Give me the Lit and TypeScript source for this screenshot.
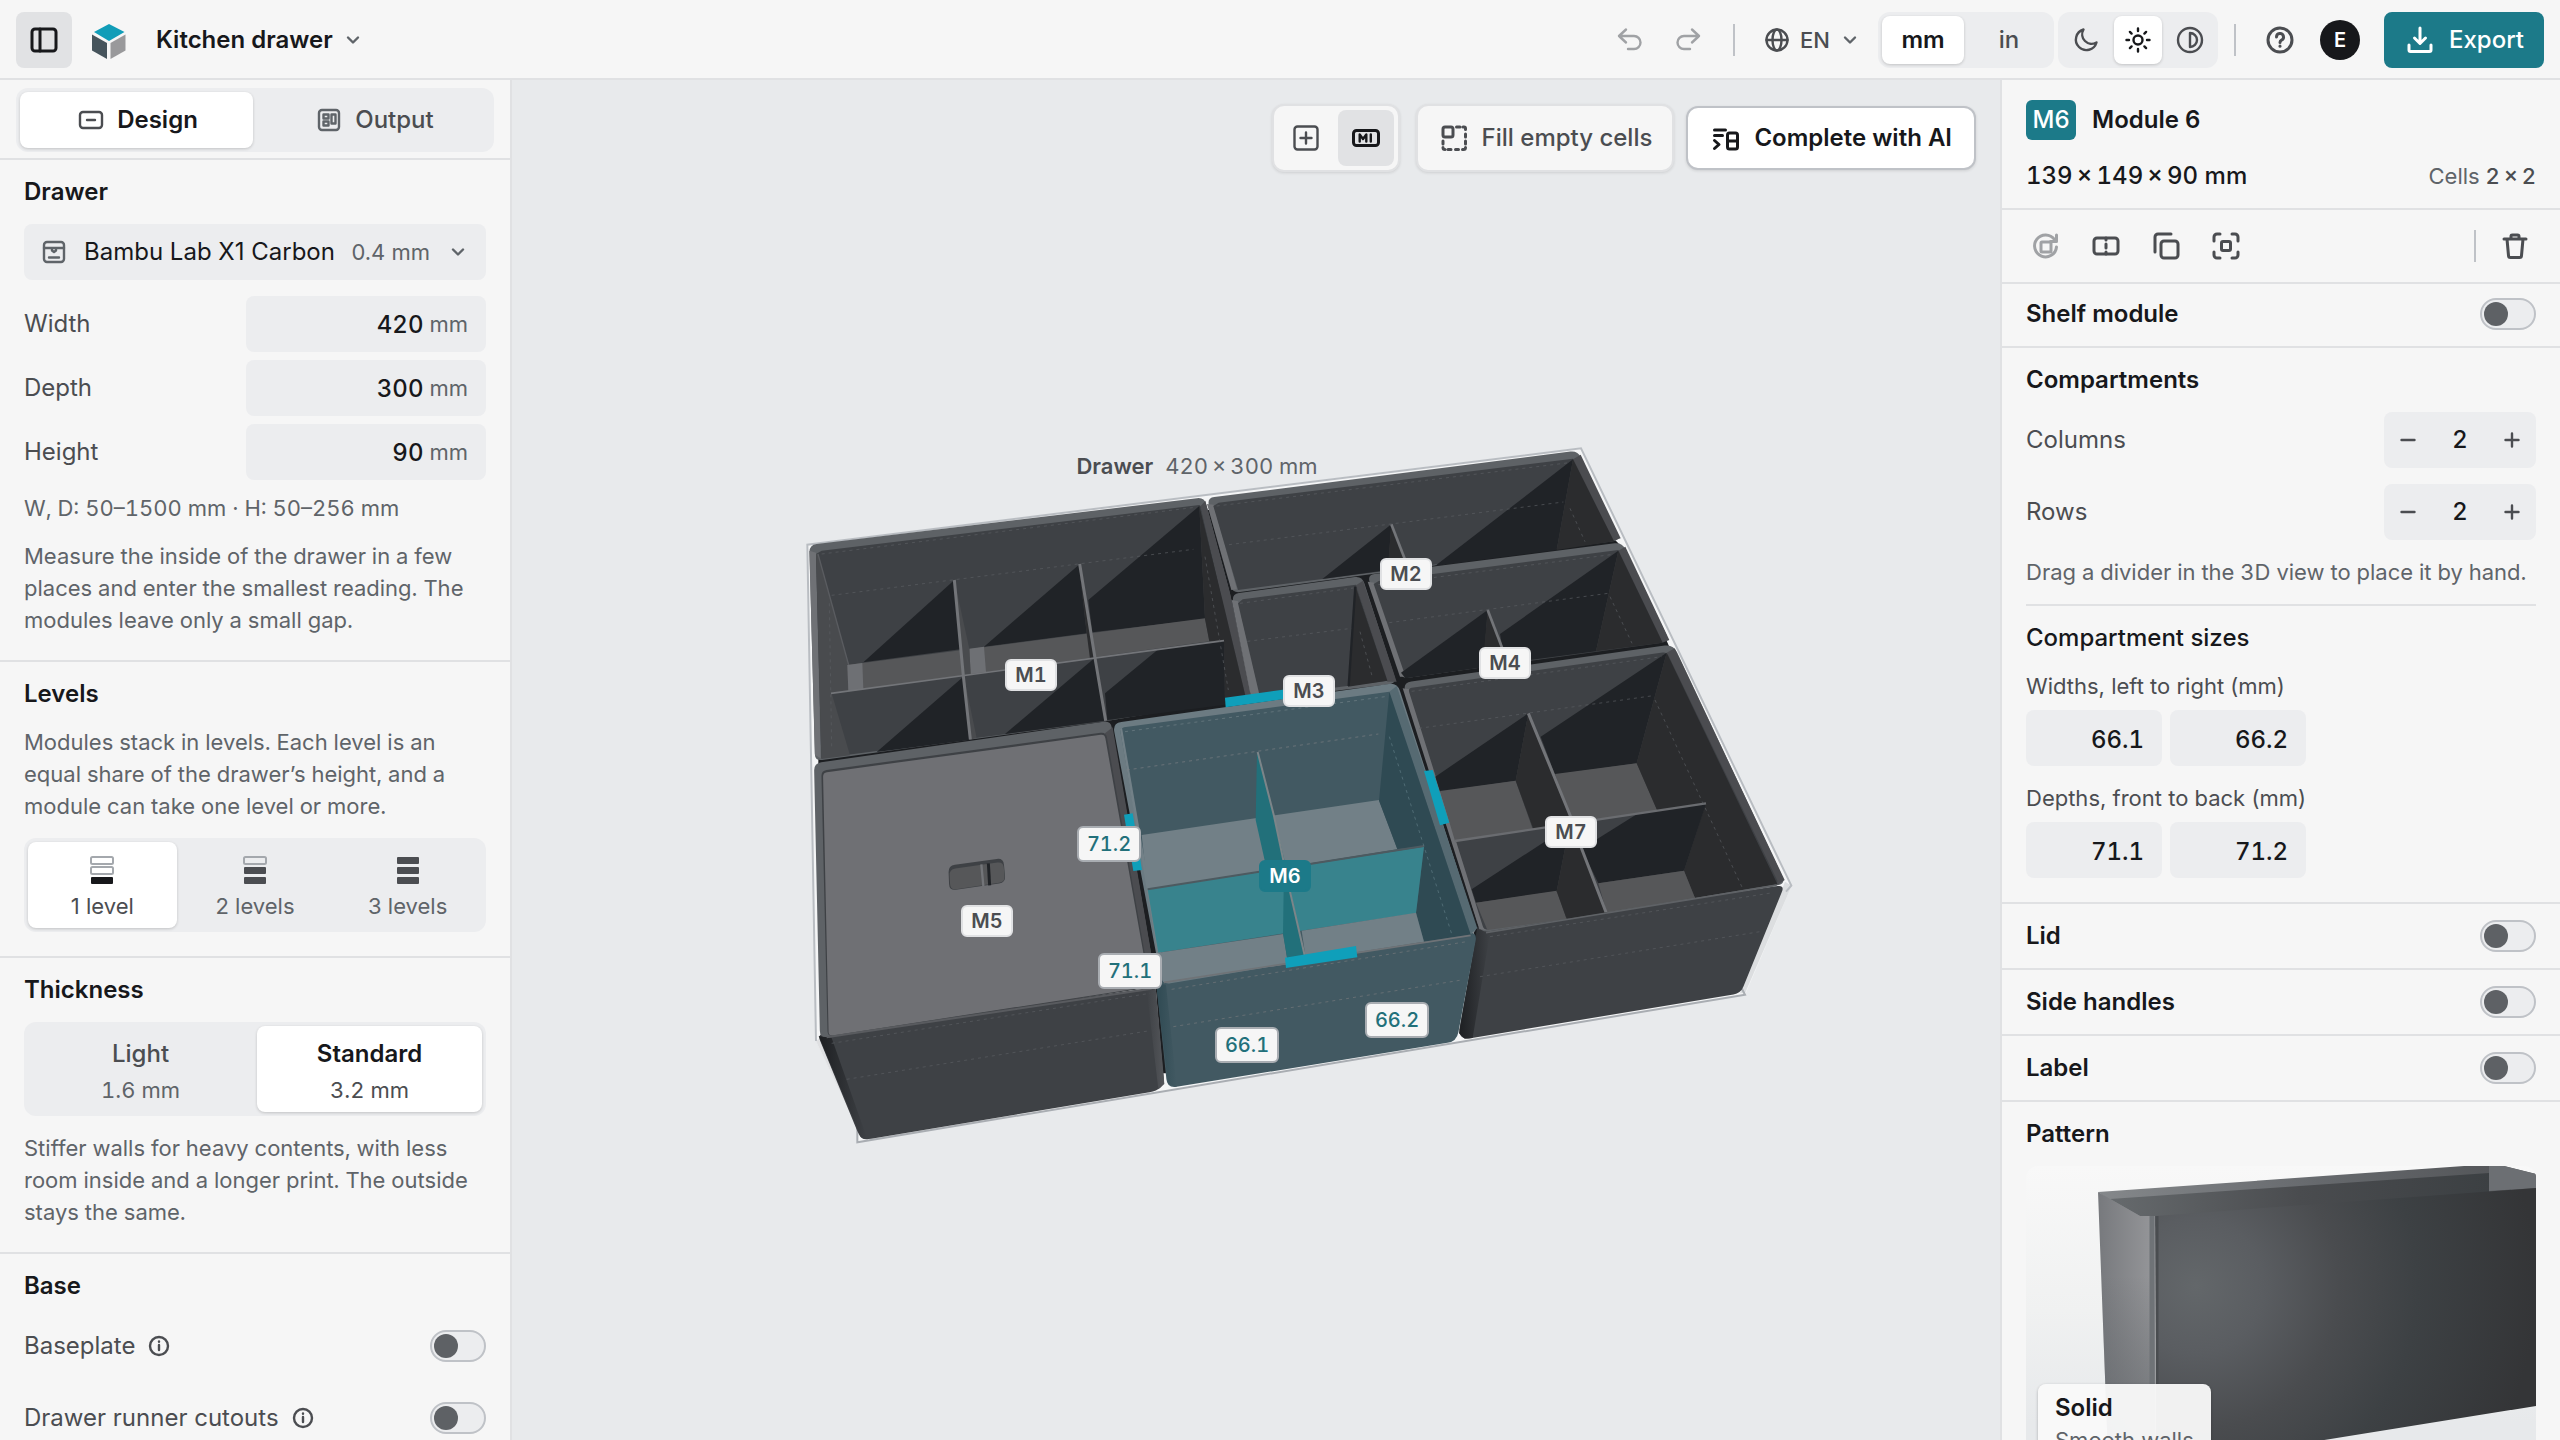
import { LitElement, html, svg, css, type TemplateResult, type SVGTemplateResult } from "lit";
import { customElement, property, state } from "lit/decorators.js";
import { classMap } from "lit/directives/class-map.js";
import { styleMap } from "lit/directives/style-map.js";

/* ---------- shared tokens and controls ---------- */

const base = css`
  :host {
    --ink: #17181b;
    --ink-2: #4b4d51;
    --ink-3: #5f6469;
    --panel: #f6f6f6;
    --well: #ecedef;
    --line: #e0e1e3;
    --line-strong: #bfc2c7;
    --teal: #1c7a89;
    color: var(--ink);
    font-family: Inter, "Liberation Sans", sans-serif;
    font-optical-sizing: none;
    font-size: 24px;
    line-height: 32px;
  }
  *,
  *::before {
    box-sizing: border-box;
  }
  h1,
  h2,
  h3,
  p,
  dl,
  dd,
  fieldset {
    margin: 0;
    padding: 0;
    border: 0;
    min-width: 0;
  }
  button,
  input,
  select {
    font: inherit;
    color: inherit;
    font-optical-sizing: none;
    border: 0;
    background: none;
    padding: 0;
    margin: 0;
    cursor: pointer;
  }
  svg {
    display: block;
    flex: none;
  }
  h2,
  h3 {
    font-size: 24px;
    line-height: 32px;
    font-weight: 600;
  }
  .section {
    display: flex;
    flex-direction: column;
    padding: 16px 24px 24px;
    border-bottom: 2px solid var(--line);
  }
  .note {
    font-size: 22px;
    line-height: 32px;
    color: var(--ink-3);
    font-variant-numeric: tabular-nums;
  }
  .seg {
    display: flex;
    gap: 4px;
    padding: 4px;
    border-radius: 12px;
    background: var(--well);
  }
  .seg button {
    display: flex;
    flex: 1;
    align-items: center;
    justify-content: center;
    border-radius: 8px;
    color: var(--ink-2);
    font-weight: 500;
  }
  .seg button.on {
    background: #fff;
    color: var(--ink);
    box-shadow: 0 1px 3px rgba(23, 24, 27, 0.2);
  }
  .switch {
    appearance: none;
    flex: none;
    display: flex;
    align-items: center;
    width: 56px;
    height: 32px;
    padding: 0 2px;
    border: 2px solid var(--line-strong);
    border-radius: 16px;
    background: var(--well);
  }
  .switch::before {
    content: "";
    width: 24px;
    height: 24px;
    border-radius: 50%;
    background: #5e6165;
  }
  .switch:checked {
    justify-content: flex-end;
  }
`;

/* ---------- icons, drawn on a 32 unit grid ---------- */

const glyphs: Record<string, SVGTemplateResult> = {
  sidebar: svg`<rect x="4" y="5" width="24" height="22" rx="3"/><path d="M12 5v22"/>`,
  chevron: svg`<path d="M11 13.500l5 5 5-5"/>`,
  design: svg`<rect x="5" y="8" width="22" height="16" rx="3"/><path d="M12 16h8"/>`,
  output: svg`<rect x="6" y="6" width="20" height="20" rx="3"/><rect x="10.500" y="10.500" width="5" height="4"/><rect x="18.500" y="10.500" width="4" height="9"/><rect x="10.500" y="17.500" width="5" height="4"/>`,
  printer: svg`<rect x="6" y="6" width="20" height="20" rx="3"/><path d="M6 12h20M11 21.500h10M14 12v2.500l2 1.500 2-1.500V12"/>`,
  info: svg`<circle cx="16" cy="16" r="9"/><path d="M16 15v5"/><path d="M16 11.500v.2"/>`,
  undo: svg`<path d="M12 6.500L5 13l7 6.500M5 13h15a6 6 0 0 1 0 13h-6" transform="translate(1 -1)"/>`,
  redo: svg`<path d="M20 6.500l7 6.500-7 6.500M27 13H12a6 6 0 0 0 0 13h6" transform="translate(-1 -1)"/>`,
  globe: svg`<circle cx="16" cy="16" r="10.500"/><ellipse cx="16" cy="16" rx="4.500" ry="10.500"/><path d="M5.500 16h21"/>`,
  moon: svg`<path d="M13.500 5.500a10.500 10.500 0 1 0 13 13A9.500 9.500 0 0 1 13.500 5.500z"/>`,
  sun: svg`<circle cx="16" cy="16" r="4.500"/><path d="M16 4.500v2.500M16 25v2.500M4.500 16H7M25 16h2.500M7.900 7.900l1.700 1.700M22.400 22.400l1.700 1.700M24.100 7.900l-1.700 1.700M9.600 22.400l-1.700 1.700"/>`,
  contrast: svg`<circle cx="16" cy="16" r="12"/><path d="M16 9v14a7 7 0 0 0 0-14z"/>`,
  help: svg`<circle cx="16" cy="16" r="12"/><path d="M12.500 13a3.500 3.500 0 1 1 5 3.200c-1 .5-1.500 1-1.500 2.300"/><path d="M16 22v.3"/>`,
  download: svg`<path d="M16 4v15M10.500 14l5.500 5.500 5.500-5.500M5 21v5a1.500 1.500 0 0 0 1.500 1.500h19A1.500 1.500 0 0 0 27 26v-5"/>`,
  add: svg`<rect x="4.500" y="4.500" width="23" height="23" rx="3"/><path d="M16 10.500v11M10.500 16h11"/>`,
  tag: svg`<rect x="3.500" y="8.500" width="25" height="15" rx="3"/><path d="M9.700 19.500v-7l3.300 4.500 3.300-4.500v7M20.800 12.500v7" stroke-width="2.400"/>`,
  fill: svg`<rect x="5" y="5" width="10" height="10" rx="2"/><path d="M18.500 5h3.500M25 5h1a1.500 1.500 0 0 1 1.500 1.500v1M27.500 12v3M27.500 19v3M27.500 25.500a2 2 0 0 1-2 2h-1M20.500 27.500h-3M13 27.500h-3M5 19v3M5 25.500a2 2 0 0 0 2 2"/>`,
  ai: svg`<path d="M4.500 8h11M4.500 13.500h8M4.500 18.500l4.500 4-4.500 4"/><rect x="17.500" y="11" width="10" height="16" rx="2"/><path d="M17.500 19h10"/>`,
  rotate: svg`<path d="M24.500 9.500A11 11 0 1 0 26.500 17"/><path d="M26.500 5v6.500h-6"/><rect x="11" y="12" width="10" height="10" rx="1"/>`,
  split: svg`<rect x="4" y="8" width="24" height="16" rx="3"/><path d="M16 8v2M16 14v4M16 22v2"/>`,
  copy: svg`<rect x="11" y="11" width="17" height="17" rx="3"/><path d="M5 22V7a3 3 0 0 1 3-3h13"/>`,
  focus: svg`<path d="M4 11V7a3 3 0 0 1 3-3h3M22 4h3a3 3 0 0 1 3 3v4M28 22v3a3 3 0 0 1-3 3h-3M10 28H7a3 3 0 0 1-3-3v-3"/><rect x="11.500" y="11.500" width="9" height="9" rx="1.500"/>`,
  trash: svg`<path d="M5 9h22M12 9V6.500A1.500 1.500 0 0 1 13.500 5h5A1.500 1.500 0 0 1 20 6.500V9M8 9l1.500 16.500a2 2 0 0 0 2 2h9a2 2 0 0 0 2-2L24 9"/>`,
  minus: svg`<path d="M9.500 16h13"/>`,
  plus: svg`<path d="M9.500 16h13M16 9.500v13"/>`,
};

const icon = (name: string, weight = 2.4) => html`<svg
  width="32"
  height="32"
  viewBox="0 0 32 32"
  fill="none"
  stroke="currentColor"
  stroke-width=${weight}
  stroke-linecap="round"
  stroke-linejoin="round"
  aria-hidden="true"
>
  ${glyphs[name]}
</svg>`;

/* ---------- top bar ---------- */

@customElement("top-bar")
class TopBar extends LitElement {
  @state() unit = "mm";
  @state() theme = "sun";

  static styles = [
    base,
    css`
      :host {
        display: block;
      }
      .bar {
        display: flex;
        align-items: center;
        height: 80px;
        padding: 2px 16px 0;
        background: var(--panel);
        border-bottom: 2px solid var(--line);
      }
      .panel-toggle {
        display: grid;
        place-items: center;
        width: 56px;
        height: 56px;
        border-radius: 8px;
        background: #e1e2e4;
      }
      .logo {
        margin: 4px 30px 0 20px;
      }
      .project {
        display: flex;
        align-items: center;
        gap: 4px;
        font-weight: 600;
      }
      .project svg,
      .lang svg:last-child {
        color: var(--ink-3);
      }
      .right {
        display: flex;
        align-items: center;
        margin-left: auto;
        color: var(--ink-2);
      }
      .icon {
        display: grid;
        place-items: center;
        width: 60px;
        height: 56px;
      }
      .icon:disabled {
        color: #a0a2a5;
      }
      .rule {
        width: 2px;
        height: 32px;
        margin: 0 14px;
        background: var(--line-strong);
      }
      .theme + .rule {
        margin-left: 16px;
      }
      .lang {
        display: flex;
        align-items: center;
        margin: 0 12px 0 12px;
        font-size: 22px;
        font-weight: 500;
      }
      .lang select {
        appearance: none;
        margin: 0 4px 0 7px;
      }
      .unit {
        width: 176px;
        height: 56px;
        margin-right: 4px;
      }
      .theme {
        width: 160px;
        height: 56px;
      }
      .unit .on {
        font-weight: 600;
      }
      .avatar {
        display: grid;
        place-items: center;
        width: 40px;
        height: 40px;
        margin: 0 24px 0 10px;
        border-radius: 50%;
        background: var(--ink);
        color: #fff;
        font-size: 20px;
        font-weight: 600;
      }
      .export {
        display: flex;
        align-items: center;
        justify-content: center;
        gap: 13px;
        width: 160px;
        height: 56px;
        border-radius: 8px;
        background: var(--teal);
        color: #fff;
        font-weight: 500;
      }
    `,
  ];

  render() {
    return html`<header class="bar">
      <button class="panel-toggle" aria-label="Toggle side panel">${icon("sidebar", 3)}</button>
      <svg class="logo" width="34" height="36" viewBox="0 0 34 36" aria-hidden="true">
        <path d="M17 0l15.500 8L17 17 2 8z" fill="#119db8" />
        <path d="M0 10.500l15 8.500v16L0 26.500z" fill="#46545c" />
        <path d="M18.500 19l15-8.500v16l-15 8.500z" fill="#99999b" />
      </svg>
      <button class="project">Kitchen drawer ${icon("chevron")}</button>
      <div class="right">
        <button class="icon" aria-label="Undo" disabled>${icon("undo")}</button>
        <button class="icon" aria-label="Redo" disabled>${icon("redo")}</button>
        <span class="rule"></span>
        <label class="lang"
          >${icon("globe")}<select aria-label="Language">
            <option>EN</option></select
          >${icon("chevron")}</label
        >
        <div class="seg unit" role="group" aria-label="Units">
          ${["mm", "in"].map(
            (u) => html`<button
              class=${classMap({ on: this.unit === u })}
              aria-pressed=${this.unit === u}
              @click=${() => (this.unit = u)}
            >
              ${u}
            </button>`
          )}
        </div>
        <div class="seg theme" role="group" aria-label="Theme">
          ${["moon", "sun", "contrast"].map(
            (t) => html`<button
              class=${classMap({ on: this.theme === t })}
              aria-label=${t}
              aria-pressed=${this.theme === t}
              @click=${() => (this.theme = t)}
            >
              ${icon(t)}
            </button>`
          )}
        </div>
        <span class="rule"></span>
        <button class="icon" aria-label="Help">${icon("help", 3)}</button>
        <button class="avatar" aria-label="Account">E</button>
        <button class="export">${icon("download", 3)} Export</button>
      </div>
    </header>`;
  }
}

/* ---------- left panel ---------- */

@customElement("design-panel")
class DesignPanel extends LitElement {
  @state() tab = "Design";
  @state() level = 1;
  @state() wall = "Standard";

  static styles = [
    base,
    css`
      :host {
        display: flex;
        flex-direction: column;
        min-height: 0;
        background: var(--panel);
        border-right: 2px solid var(--line);
      }
      .tabs {
        padding: 8px 16px 6px;
        border-bottom: 2px solid var(--line);
      }
      .tabs .seg {
        height: 64px;
      }
      .tabs button {
        gap: 10px;
        font-weight: 500;
      }
      .tabs button.on {
        font-weight: 600;
      }
      .tabs svg {
        color: var(--ink-3);
      }
      .tabs .on svg {
        color: var(--ink-2);
      }
      .scroll {
        overflow-y: auto;
        scrollbar-width: none;
      }
      .picker {
        display: flex;
        align-items: center;
        height: 56px;
        margin: 16px 0;
        padding: 0 12px 0 14px;
        border-radius: 8px;
        background: var(--well);
        color: var(--ink-3);
      }
      .picker select {
        appearance: none;
        flex: 1;
        min-width: 0;
        margin: 0 12px 0 14px;
        color: var(--ink);
      }
      .picker span {
        font-size: 22px;
        margin-right: 12px;
      }
      .fields {
        display: grid;
        gap: 8px;
        margin-bottom: 12px;
      }
      .field {
        display: flex;
        align-items: center;
        justify-content: space-between;
        color: var(--ink-2);
      }
      .box {
        display: flex;
        align-items: center;
        gap: 6px;
        width: 240px;
        height: 56px;
        padding: 0 18px;
        border-radius: 8px;
        background: var(--well);
        font-size: 22px;
        color: var(--ink-3);
      }
      .box input {
        flex: 1;
        min-width: 0;
        padding-top: 2px;
        text-align: right;
        font-size: 24px;
        font-weight: 500;
        color: var(--ink);
        font-variant-numeric: tabular-nums;
      }
      .gap {
        margin-top: 16px;
      }
      .levels {
        margin-top: 16px;
        height: 94px;
      }
      .seg.stack button {
        flex-direction: column;
        padding-top: 6px;
      }
      .levels button {
        gap: 8px;
        font-size: 22px;
        line-height: 28px;
        font-weight: 400;
        color: var(--ink-3);
      }
      .levels button.on {
        color: var(--ink-2);
      }
      .wall {
        margin: 16px 0;
        height: 94px;
      }
      .wall button {
        line-height: 36px;
      }
      .wall button.on b {
        font-weight: 600;
      }
      .wall b {
        font-weight: 500;
      }
      .wall span {
        font-size: 22px;
        font-weight: 400;
        color: var(--ink-3);
        font-variant-numeric: tabular-nums;
      }
      .wall .on span {
        color: var(--ink-2);
      }
      .toggle {
        display: flex;
        align-items: center;
        height: 72px;
        color: var(--ink-2);
      }
      .toggle .tip {
        margin-left: 8px;
      }
      .toggle .switch {
        margin-left: auto;
      }
      .base {
        border: 0;
      }
      .base h2 {
        margin-bottom: 8px;
      }
    `,
  ];

  private stack(count: number) {
    return html`<svg width="24" height="28" viewBox="0 0 24 28" aria-hidden="true">
      ${[0, 1, 2].map((row) =>
        row >= 3 - count
          ? svg`<rect x="1" y=${row * 10 + 1} width="22" height="7" rx="1" fill=${this.level === count ? "#17181b" : "#4b4d51"}/>`
          : svg`<rect x="1" y=${row * 10 + 1} width="22" height="7" rx="1.500" fill="none" stroke="#a4a8ad" stroke-width="2"/>`
      )}
    </svg>`;
  }

  private field(label: string, value: string) {
    return html`<label class="field"
      >${label}<span class="box"><input .value=${value} inputmode="numeric" />mm</span></label
    >`;
  }

  private toggle(label: string, id: string) {
    return html`<div class="toggle">
      <label for=${id}>${label}</label>
      <button class="tip" aria-label="About ${label}">${icon("info")}</button>
      <input class="switch" type="checkbox" id=${id} />
    </div>`;
  }

  render() {
    return html`<div class="tabs">
        <div class="seg">
          ${["Design", "Output"].map(
            (t) => html`<button
              class=${classMap({ on: this.tab === t })}
              aria-pressed=${this.tab === t}
              @click=${() => (this.tab = t)}
            >
              ${icon(t.toLowerCase())} ${t}
            </button>`
          )}
        </div>
      </div>
      <div class="scroll">
        <section class="section">
          <h2>Drawer</h2>
          <label class="picker"
            >${icon("printer")}<select aria-label="Printer">
              <option>Bambu Lab X1 Carbon</option></select
            ><span>0.4 mm</span>${icon("chevron")}</label
          >
          <div class="fields">
            ${this.field("Width", "420")} ${this.field("Depth", "300")} ${this.field("Height", "90")}
          </div>
          <p class="note">W, D: 50–1500 mm · H: 50–256 mm</p>
          <p class="note gap">
            Measure the inside of the drawer in a few places and enter the smallest reading. The modules leave only a
            small gap.
          </p>
        </section>
        <section class="section">
          <h2>Levels</h2>
          <p class="note gap">
            Modules stack in levels. Each level is an equal share of the drawer’s height, and a module can take one
            level or more.
          </p>
          <div class="seg stack levels" role="group" aria-label="Levels">
            ${[1, 2, 3].map(
              (n) => html`<button
                class=${classMap({ on: this.level === n })}
                aria-pressed=${this.level === n}
                @click=${() => (this.level = n)}
              >
                ${this.stack(n)}<span>${n} ${n === 1 ? "level" : "levels"}</span>
              </button>`
            )}
          </div>
        </section>
        <section class="section">
          <h2>Thickness</h2>
          <div class="seg stack wall" role="group" aria-label="Thickness">
            ${[
              ["Light", "1.6 mm"],
              ["Standard", "3.2 mm"],
            ].map(
              ([name, size]) => html`<button
                class=${classMap({ on: this.wall === name })}
                aria-pressed=${this.wall === name}
                @click=${() => (this.wall = name)}
              >
                <b>${name}</b><span>${size}</span>
              </button>`
            )}
          </div>
          <p class="note">
            Stiffer walls for heavy contents, with less room inside and a longer print. The outside stays the same.
          </p>
        </section>
        <section class="section base">
          <h2>Base</h2>
          ${this.toggle("Baseplate", "baseplate")} ${this.toggle("Drawer runner cutouts", "runners")}
        </section>
      </div>`;
  }
}

/* ---------- 3D view ---------- */

type Pt = [number, number];

/* Scene units are a third of a pixel at full size. */
const VIEW = { x: -192, y: -210, w: 3240, h: 2400 };

const C = {
  lit: "#3e4145",
  shade: "#202327",
  side: "#2b2c2e",
  left: "#494b4e",
  floor: "#565759",
  floorLit: "#6e7074",
  rimBack: "#5e6266",
  rimLeft: "#6f7175",
  rimRight: "#4b4c50",
  edge: "#737579",
};

const poly = (points: string, fill: string) => svg`<polygon points=${points} fill=${fill}/>`;
const line = (points: string, stroke: string, width = 5) =>
  svg`<polyline points=${points} fill="none" stroke=${stroke} stroke-width=${width}/>`;
const dots = (points: string, stroke = "#5b5e62") =>
  svg`<polyline points=${points} fill="none" stroke=${stroke} stroke-width="2" stroke-dasharray="9 12"/>`;

/* Closed outline with each corner rounded off by radius r. */
function rounded(points: Pt[], r: number): string {
  const n = points.length;
  const toward = (a: Pt, b: Pt): Pt => {
    const d = Math.hypot(b[0] - a[0], b[1] - a[1]);
    const k = Math.min(r / d, 0.5);
    return [a[0] + (b[0] - a[0]) * k, a[1] + (b[1] - a[1]) * k];
  };
  return (
    points
      .map((p, i) => {
        const from = toward(p, points[(i + n - 1) % n]);
        const to = toward(p, points[(i + 1) % n]);
        return `${i ? "L" : "M"}${from.join(" ")}Q${p.join(" ")} ${to.join(" ")}`;
      })
      .join("") + "Z"
  );
}
const shell = (points: Pt[], fill: string, r = 22) => svg`<path d=${rounded(points, r)} fill=${fill}/>`;

const scene = svg`
  <defs>
    <linearGradient id="corner" x1="0" x2="1"><stop offset="0" stop-color="#1d1f22"/><stop offset="1" stop-color="#3e4145"/></linearGradient>
    <linearGradient id="cornerTeal" x1="0" x2="1"><stop offset="0" stop-color="#2f4a53"/><stop offset="1" stop-color="#425962"/></linearGradient>
    <linearGradient id="cornerRight" x1="0" x2="1"><stop offset="0" stop-color="#3e4145"/><stop offset="1" stop-color="#54565a"/></linearGradient>
  </defs>

  <polygon points="80,342 2403,53 3035,1367 2895,1695 232,2137 232,2095 108,1833" fill="#f4f5f6"/>
  <polygon points="3015,1355 3035,1367 2895,1690 2880,1690" fill="#dcdee0"/>
  <polygon points="108,1833 120,1825 240,2110 232,2095" fill="#dfe0e2"/>
  ${line("108,1833 82,344 2403,55 3034,1367 3018,1385", "#b9bdc2", 6)}
  ${line("232,2090 232,2137 2895,1694 2885,1675", "#a9adb2", 6)}
  <polygon points="1272,240 1290,240 1370,480 2500,325 2515,340 2660,632 2672,660 2120,1500 2038,1802 2100,1700 2080,1500 1165,1650 1160,1930 1148,1930 1126,1660 985,885 115,1005 115,985 1250,800" fill="#1c1e21"/>

  <!-- M1 -->
  ${shell([[88, 345], [1273, 202], [1350, 490], [1415, 800], [985, 872], [105, 993]], C.rimBack)}
  ${poly("88,362 108,368 122,985 105,975", C.rimLeft)}
  ${poly("1262,228 1276,212 1350,490 1413,800 1395,800 1325,500", C.rimRight)}
  ${poly("108,372 125,362 1258,225 1262,228 1325,500 1397,800 985,872 124,985", C.lit)}
  ${poly("108,372 114,372 205,705 205,783 155,790 210,976 124,987", C.left)}
  ${line("114,372 206,705", "#5a5c60", 4)}
  ${poly("523,450 250,697 540,658", C.shade)}
  ${poly("897,404 612,650 920,610", C.shade)}
  ${poly("1258,228 925,510 937,607 1275,567", C.shade)}
  ${poly("202,705 1275,565 1288,634 205,783", C.floor)}
  ${poly("202,705 247,699 250,778 205,784", C.floorLit)}
  ${poly("568,656 612,650 618,726 572,732", C.floorLit)}
  ${poly("1258,228 1275,567 1288,634 1332,630 1335,824 1397,802 1325,500", C.side)}
  ${poly("523,450 568,656 572,734 550,740", C.left)}
  ${poly("897,404 920,610 930,686 945,684", C.side)}
  ${poly("550,740 290,966 568,930", C.shade)}
  ${poly("943,685 675,912 974,872", C.shade)}
  ${poly("1135,658 975,790 982,870 1335,824 1332,632", C.shade)}
  ${poly("552,740 590,924 570,928", C.left)}
  ${line("153,790 1332,632", C.edge, 5)}
  ${line("523,450 550,738 571,928", C.edge, 9)}
  ${line("899,402 945,684 977,872", C.edge, 9)}
  ${dots("125,372 1245,232")}${dots("155,496 1240,358")}${dots("148,520 155,950")}${dots("1275,380 1345,780")}

  <!-- M2 -->
  ${shell([[1281, 204], [2393, 62], [2522, 330], [1358, 489]], C.rimBack)}
  ${poly("1281,222 1301,224 1371,478 1354,480", C.rimLeft)}
  ${poly("2379,88 2402,74 2522,325 2500,332", C.rimRight)}
  ${poly("1300,228 1316,218 2379,86 2502,334 1374,480", C.lit)}
  ${poly("2379,88 1965,408 2330,360", C.shade)}
  ${poly("2379,88 2330,360 2502,334", C.side)}
  ${poly("1834,283 1627,447 1824,420", C.shade)}
  ${poly("1834,283 1823,420 1886,412", C.side)}
  ${line("1834,283 1884,412", C.edge, 8)}
  ${dots("1310,228 2368,98")}${dots("1347,344 2350,216")}${dots("2370,235 2415,335")}

  <!-- M3 -->
  ${shell([[1355, 492], [1746, 438], [1850, 760], [1420, 812]], C.rimBack)}
  ${poly("1355,510 1374,514 1442,800 1413,800", C.rimLeft)}
  ${poly("1728,466 1749,452 1850,755 1822,755", C.rimRight)}
  ${poly("1374,520 1388,508 1728,464 1822,752 1440,802", C.lit)}
  ${poly("1726,468 1704,770 1822,752", C.side)}
  ${line("1726,470 1706,768", "#202327", 7)}
  ${dots("1380,520 1720,474")}${dots("1402,634 1715,595")}${dots("1740,605 1778,745")}

  <!-- M4 -->
  ${shell([[1762, 435], [2526, 337], [2668, 632], [1864, 746]], C.rimBack)}
  ${poly("1763,455 1783,458 1880,740 1860,740", C.rimLeft)}
  ${poly("2515,362 2536,350 2668,630 2647,638", C.rimRight)}
  ${poly("1781,462 1796,453 2515,360 2648,638 1878,744", C.lit)}
  ${poly("2515,362 2160,612 2176,700 2448,664", C.shade)}
  ${poly("2515,362 2448,664 2648,638", C.side)}
  ${poly("2123,540 1863,728 1876,745 2110,712", C.shade)}
  ${poly("2123,540 2108,710 2186,700", C.side)}
  ${line("2123,540 2184,700", C.edge, 8)}
  ${dots("1795,464 2500,373")}${dots("1828,578 2484,490")}${dots("2490,500 2556,640")}

  <!-- M7 -->
  ${shell([[2092, 1500], [3014, 1365], [2882, 1690], [2050, 1828], [2036, 1808]], C.lit)}
  ${poly("2092,1490 2130,1508 2078,1824 2054,1826 2037,1810", "url(#corner)")}
  ${shell([[1868, 758], [2680, 643], [3018, 1362], [2102, 1508]], C.rimBack, 26)}
  ${poly("1868,775 1888,778 2120,1500 2098,1498", C.rimLeft)}
  ${poly("2660,668 2684,655 3014,1350 2990,1366", C.rimRight)}
  ${shell([[1884, 775], [2660, 666], [2996, 1360], [2112, 1500]], C.lit, 12)}
  ${poly("2660,668 2282,920 2325,1034 2570,1000", C.shade)}
  ${poly("2245,850 1966,1040 1980,1085 2207,1052", C.shade)}
  ${poly("1980,1083 2207,1052 2258,1197 2025,1233", C.floor)}
  ${poly("2325,1032 2570,1000 2632,1142 2378,1178", C.floor)}
  ${poly("2660,668 2570,1000 2632,1142 2778,1120 2712,1322 2745,1404 2992,1362", C.side)}
  ${poly("2245,850 2207,1052 2260,1197 2380,1180", C.side)}
  ${poly("2375,1182 2075,1378 2088,1418 2330,1384 2358,1240", C.shade)}
  ${poly("2575,1150 2405,1256 2455,1360 2712,1322 2778,1122", C.shade)}
  ${poly("2088,1418 2330,1382 2360,1467 2122,1500", C.floor)}
  ${poly("2455,1360 2712,1322 2745,1404 2480,1447", C.floor)}
  ${poly("2358,1240 2330,1384 2360,1467 2480,1448 2400,1240", C.side)}
  ${line("2025,1233 2778,1120", "#6a6c70", 7)}
  ${line("2245,850 2372,1160 2405,1256 2478,1447", C.edge, 9)}
  ${line("2118,1508 2990,1366", "#5f6266", 5)}
  ${dots("1895,784 2645,680")}${dots("1917,895 2620,797")}${dots("2625,810 2890,1380")}${dots("2130,1520 2980,1388")}${dots(
    "2100,1640 2940,1505"
  )}

  <!-- M5 -->
  ${shell([[112, 1812], [1126, 1672], [1153, 1962], [1130, 1983], [252, 2130], [238, 2118]], C.lit)}
  ${poly("116,1818 155,1824 262,2128 242,2120", "url(#corner)")}
  ${poly("1100,1678 1126,1660 1153,1962 1135,1978", "url(#cornerRight)")}
  ${shell([[102, 1000], [992, 872], [1130, 1668], [120, 1824]], C.rimBack)}
  ${poly("975,910 998,892 1128,1655 1108,1672", C.rimRight)}
  ${shell([[124, 1022], [978, 906], [1112, 1672], [143, 1820]], C.lit, 16)}
  ${shell([[129, 1028], [974, 913], [1108, 1670], [146, 1818]], "#6f7074", 12)}
  ${line("140,1822 1115,1676", "#595b5f", 6)}
  ${shell([[505, 1307], [670, 1284], [677, 1358], [508, 1382]], C.lit, 20)}
  ${shell([[508, 1318], [670, 1295], [675, 1356], [511, 1380]], C.floor, 18)}
  ${line("604,1303 610,1368", "#737579", 7)}
  ${line("625,1300 629,1366", C.shade, 9)}
  ${dots("155,1840 1110,1690")}${dots("200,1948 1110,1802")}

  <!-- M6 -->
  ${shell([[1128, 1650], [2092, 1505], [2030, 1834], [1162, 1975]], "#425962", 28)}
  ${poly("1128,1660 1158,1664 1190,1970 1164,1962", "url(#cornerTeal)")}
  ${shell([[998, 880], [1852, 758], [2094, 1508], [1146, 1664]], "#6c7b82", 26)}
  ${poly("1828,785 1850,768 2092,1495 2070,1512", "#566a72")}
  ${poly("1020,898 1032,892 1828,785 2072,1514 1152,1654", "#425962")}
  ${poly("1020,898 1026,893 1148,1600 1152,1656 1134,1580", "#728087")}
  ${poly("1085,1215 1797,1110 1852,1258 1103,1378", "#728087")}
  ${poly("1828,785 1797,1112 1852,1257 1932,1248 1908,1448 1932,1535 2072,1514", "#2f4a53")}
  ${poly("1103,1378 1932,1250 1908,1450 1135,1568", "#38838d")}
  ${poly("1135,1568 1510,1512 1524,1602 1150,1657", "#728087")}
  ${poly("1565,1502 1908,1448 1932,1535 1578,1590", "#728087")}
  ${line("1103,1378 1932,1248", "#4d5a60", 6)}
  ${poly("1431,966 1427,1170 1460,1318 1520,1318 1483,1165", "#22707a")}
  ${poly("1512,1310 1509,1512 1524,1600 1578,1592 1532,1385 1518,1318", "#22707a")}
  ${line("1433,966 1482,1158 1530,1385 1576,1585", "#7c8589", 6)}
  ${line("1152,1657 2072,1516", "#6f7377", 5)}
  ${dots("1035,905 1815,800", "#6f8087")}${dots("1040,1020 1795,912", "#7b7f83")}${dots("1828,920 2016,1515", "#5f7c85")}
  ${dots("1175,1678 2060,1535", "#76787b")}${dots("1180,1790 2045,1650", "#76787b")}

  ${poly("1335,803 1540,775 1540,803 1337,832", "#0f9fba")}
  ${poly("1032,1154 1058,1150 1086,1320 1060,1323", "#0f9fba")}
  ${poly("1932,1023 1958,1020 2008,1178 1980,1186", "#0f9fba")}
  ${poly("1515,1583 1728,1548 1732,1582 1518,1614", "#0f9fba")}
`;

interface Pin {
  text: string;
  x: number;
  y: number;
  kind: "module" | "size";
}
const pins: Pin[] = [
  { text: "M1", x: 315, y: 315, kind: "module" },
  { text: "M2", x: 690, y: 214, kind: "module" },
  { text: "M3", x: 593, y: 331, kind: "module" },
  { text: "M4", x: 789, y: 303, kind: "module" },
  { text: "M5", x: 271, y: 561, kind: "module" },
  { text: "M6", x: 569, y: 516, kind: "module" },
  { text: "M7", x: 855, y: 472, kind: "module" },
  { text: "71.2", x: 393, y: 484, kind: "size" },
  { text: "71.1", x: 414, y: 611, kind: "size" },
  { text: "66.1", x: 531, y: 685, kind: "size" },
  { text: "66.2", x: 681, y: 660, kind: "size" },
];
const place = (x: number, y: number) => styleMap({ left: `${(x / 1080) * 100}%`, top: `${(y / 800) * 100}%` });

@customElement("drawer-view")
class DrawerView extends LitElement {
  @state() selected = "M6";

  static styles = [
    base,
    css`
      :host {
        display: grid;
        place-items: center;
        position: relative;
        min-width: 0;
        background: #e8eaec;
      }
      .tools {
        position: absolute;
        top: 24px;
        right: 24px;
        display: flex;
        align-items: center;
        gap: 12px;
      }
      .card {
        display: flex;
        align-items: center;
        gap: 4px;
        height: 68px;
        border: 2px solid var(--line);
        border-radius: 12px;
        background: var(--panel);
        box-shadow: 0 1px 3px rgba(23, 24, 27, 0.12);
        color: var(--ink-2);
        font-weight: 500;
      }
      .modes {
        margin-right: 4px;
        padding: 4px;
      }
      .modes button {
        display: grid;
        place-items: center;
        width: 56px;
        height: 56px;
        border-radius: 8px;
      }
      .modes .on {
        background: #e1e2e4;
        color: var(--ink);
      }
      .action {
        gap: 12px;
        padding: 0 20px;
      }
      .primary {
        height: 64px;
        padding: 0 22px;
        border-color: var(--line-strong);
        background: #fff;
        color: var(--ink);
        font-weight: 600;
      }
      .scene {
        position: relative;
        width: 100%;
        max-width: 1080px;
        aspect-ratio: 27 / 20;
      }
      .scene svg {
        width: 100%;
        height: 100%;
      }
      .pin,
      .caption {
        position: absolute;
        transform: translate(-50%, -50%);
        white-space: nowrap;
      }
      .pin {
        border-radius: 6px;
        background: var(--panel);
        font-size: 20px;
        line-height: 24px;
        font-weight: 600;
        font-variant-numeric: tabular-nums;
      }
      .module {
        min-width: 52px;
        height: 32px;
        border: 2px solid var(--line);
        color: var(--ink-2);
      }
      .module.on {
        border-color: var(--teal);
        background: var(--teal);
        color: #fff;
      }
      .size {
        min-width: 64px;
        height: 36px;
        border: 2px solid #a9adb2;
        color: #22707a;
        font-weight: 500;
      }
      .caption {
        font-size: 22px;
        color: var(--ink-3);
        font-variant-numeric: tabular-nums;
      }
      .caption b {
        margin-right: 12px;
        font-weight: 600;
        color: var(--ink-2);
      }
    `,
  ];

  render() {
    return html`<div class="scene">
        <svg viewBox="${VIEW.x} ${VIEW.y} ${VIEW.w} ${VIEW.h}" aria-hidden="true">${scene}</svg>
        <div class="caption" style=${place(481, 106)}><b>Drawer</b>420&thinsp;×&thinsp;300 mm</div>
        ${pins.map(
          (p) => html`<button
            class=${classMap({ pin: true, [p.kind]: true, on: p.text === this.selected })}
            style=${place(p.x, p.y)}
            @click=${() => p.kind === "module" && (this.selected = p.text)}
          >
            ${p.text}
          </button>`
        )}
      </div>
      <div class="tools">
        <div class="card modes">
          <button aria-label="Add module">${icon("add")}</button>
          <button class="on" aria-label="Show labels" aria-pressed="true">${icon("tag", 3)}</button>
        </div>
        <button class="card action">${icon("fill", 3)} Fill empty cells</button>
        <button class="card action primary">${icon("ai", 3)} Complete with AI</button>
      </div>`;
  }
}

/* ---------- right panel ---------- */

@customElement("toggle-row")
class ToggleRow extends LitElement {
  @property() label = "";
  static styles = [
    base,
    css`
      :host {
        display: block;
      }
      label {
        display: flex;
        align-items: center;
        justify-content: space-between;
        padding: 16px 24px;
        border-bottom: 2px solid var(--line);
        font-weight: 600;
      }
    `,
  ];
  render() {
    return html`<label>${this.label}<input class="switch" type="checkbox" /></label>`;
  }
}

@customElement("module-panel")
class ModulePanel extends LitElement {
  @state() counts: Record<string, number> = { Columns: 2, Rows: 2 };

  static styles = [
    base,
    css`
      :host {
        display: block;
        min-height: 0;
        overflow-y: auto;
        scrollbar-width: none;
        background: var(--panel);
        border-left: 2px solid var(--line);
      }
      .head {
        display: grid;
        gap: 20px;
        padding: 20px 24px 16px;
        border-bottom: 2px solid var(--line);
      }
      .title,
      .dims,
      .row,
      .actions {
        display: flex;
        align-items: center;
      }
      .title {
        gap: 16px;
        height: 40px;
      }
      .title span {
        display: grid;
        place-items: center;
        width: 50px;
        height: 40px;
        border-radius: 6px;
        background: var(--teal);
        color: #fff;
        font-weight: 500;
      }
      .dims,
      .row {
        justify-content: space-between;
      }
      .dims {
        font-weight: 500;
        font-variant-numeric: tabular-nums;
      }
      .dims span {
        font-size: 22px;
        font-weight: 400;
        color: var(--ink-3);
      }
      .dims b {
        font-weight: 500;
        color: var(--ink-2);
      }
      .actions {
        height: 74px;
        padding: 0 17px 0 16px;
        border-bottom: 2px solid var(--line);
        color: var(--ink-2);
      }
      .actions button {
        display: grid;
        place-items: center;
        width: 56px;
        height: 56px;
        margin-right: 4px;
      }
      .actions button:disabled {
        color: #a0a2a5;
      }
      .actions .rule {
        width: 2px;
        height: 32px;
        margin: 0 11px 0 auto;
        background: var(--line-strong);
      }
      .actions button:last-child {
        margin: 0;
      }
      .actions + toggle-row {
        margin-top: -2px;
      }
      .row {
        margin-top: 16px;
        height: 56px;
        color: var(--ink-2);
      }
      .stepper {
        display: flex;
        align-items: center;
        justify-content: space-between;
        width: 152px;
        height: 56px;
        padding: 0 8px;
        border-radius: 8px;
        background: var(--well);
      }
      .stepper input {
        width: 40px;
        text-align: center;
        color: var(--ink);
        font-weight: 500;
      }
      .hint {
        margin-top: 16px;
        padding-bottom: 16px;
        border-bottom: 2px solid var(--line);
        white-space: nowrap;
      }
      .section h3 {
        margin-top: 16px;
        font-weight: 500;
      }
      fieldset {
        display: flex;
        gap: 8px;
        margin-top: 16px;
      }
      legend {
        padding: 0 0 8px;
        font-size: 22px;
        line-height: 32px;
        color: var(--ink-2);
      }
      fieldset input {
        width: 136px;
        height: 56px;
        padding: 2px 18px 0 0;
        border-radius: 8px;
        background: var(--well);
        text-align: right;
        font-weight: 500;
        font-variant-numeric: tabular-nums;
      }
      .pattern {
        position: relative;
        margin-top: 16px;
        border-radius: 12px;
        overflow: hidden;
      }
      .pattern svg {
        width: 100%;
        height: auto;
      }
      .tile {
        position: absolute;
        left: 12px;
        bottom: 12px;
        padding: 8px 17px;
        border-radius: 8px;
        background: rgba(250, 250, 250, 0.95);
        box-shadow: 0 1px 3px rgba(23, 24, 27, 0.3);
        font-weight: 600;
        text-align: left;
      }
      .tile span {
        display: block;
        font-size: 22px;
        line-height: 32px;
        font-weight: 400;
        color: var(--ink-3);
      }
    `,
  ];

  private step(label: string, by: number) {
    this.counts = { ...this.counts, [label]: Math.max(1, this.counts[label] + by) };
  }

  private stepper(label: string): TemplateResult {
    const id = label.toLowerCase();
    return html`<div class="row">
      <label for=${id}>${label}</label>
      <div class="stepper">
        <button aria-label="Fewer ${id}" @click=${() => this.step(label, -1)}>${icon("minus")}</button>
        <input id=${id} inputmode="numeric" .value=${String(this.counts[label])} />
        <button aria-label="More ${id}" @click=${() => this.step(label, 1)}>${icon("plus")}</button>
      </div>
    </div>`;
  }

  private sizes(legend: string, values: string[]) {
    return html`<fieldset>
      <legend>${legend}</legend>
      ${values.map((v, i) => html`<input aria-label="${legend} ${i + 1}" .value=${v} inputmode="decimal" />`)}
    </fieldset>`;
  }

  render() {
    return html`<div class="head">
        <div class="title">
          <span>M6</span>
          <h2>Module 6</h2>
        </div>
        <div class="dims">
          139&thinsp;×&thinsp;149&thinsp;×&thinsp;90 mm <span>Cells <b>2&thinsp;×&thinsp;2</b></span>
        </div>
      </div>
      <div class="actions">
        <button aria-label="Rotate" disabled>${icon("rotate", 3)}</button>
        <button aria-label="Split">${icon("split", 3)}</button>
        <button aria-label="Duplicate">${icon("copy", 3)}</button>
        <button aria-label="Focus">${icon("focus", 3)}</button>
        <span class="rule"></span>
        <button aria-label="Delete">${icon("trash", 3)}</button>
      </div>
      <toggle-row label="Shelf module"></toggle-row>
      <section class="section">
        <h2>Compartments</h2>
        ${this.stepper("Columns")} ${this.stepper("Rows")}
        <p class="note hint">Drag a divider in the 3D view to place it by hand.</p>
        <h3>Compartment sizes</h3>
        ${this.sizes("Widths, left to right (mm)", ["66.1", "66.2"])}
        ${this.sizes("Depths, front to back (mm)", ["71.1", "71.2"])}
      </section>
      <toggle-row label="Lid"></toggle-row>
      <toggle-row label="Side handles"></toggle-row>
      <toggle-row label="Label"></toggle-row>
      <section class="section">
        <h2>Pattern</h2>
        <button class="pattern">
          <svg viewBox="0 0 510 310" aria-hidden="true">
            <defs>
              <linearGradient id="sky" x2="0" y2="1">
                <stop offset="0" stop-color="#f8f8f8" />
                <stop offset=".45" stop-color="#f0f1f1" />
                <stop offset=".8" stop-color="#e7e9eb" />
              </linearGradient>
              <linearGradient id="flank" x2="1" y2="0">
                <stop offset="0" stop-color="#77797d" />
                <stop offset="1" stop-color="#96979a" />
              </linearGradient>
              <linearGradient id="flankShade" x2="0" y2="1">
                <stop offset=".3" stop-color="#5e6266" stop-opacity="0" />
                <stop offset="1" stop-color="#5e6266" stop-opacity=".8" />
              </linearGradient>
              <linearGradient id="lip">
                <stop offset="0" stop-color="#85888b" />
                <stop offset=".5" stop-color="#66696d" />
                <stop offset="1" stop-color="#505255" />
              </linearGradient>
              <linearGradient id="inside">
                <stop offset="0" stop-color="#666a6d" />
                <stop offset=".5" stop-color="#4a4c4f" />
                <stop offset="1" stop-color="#3c4043" />
              </linearGradient>
              <radialGradient id="front" gradientUnits="userSpaceOnUse" cx="170" cy="120" r="340">
                <stop offset="0" stop-color="#63676a" />
                <stop offset=".2" stop-color="#5a5d61" />
                <stop offset=".42" stop-color="#4a4c4f" />
                <stop offset=".65" stop-color="#3d4144" />
                <stop offset="1" stop-color="#343537" />
              </radialGradient>
            </defs>
            <rect width="510" height="320" fill="url(#sky)" />
            <path d="M72 26L438 0h40l32 8v30L120 60z" fill="url(#lip)" />
            <path d="M84 33L463 7v28L129 60 114 50z" fill="url(#inside)" />
            <path d="M463 0h15l32 8v14l-47 3z" fill="#6c6f73" />
            <path d="M72 26L114 50h15v255L82 290z" fill="url(#flank)" />
            <path d="M72 26L114 50h15v255L82 290z" fill="url(#flankShade)" />
            <path d="M129 50L510 22v218L131 301z" fill="url(#front)" />
            <path d="M126 50v252" stroke="#6f7377" stroke-width="5" />
            <path d="M131 50v250" stroke="#4a4d50" stroke-width="3" />
          </svg>
          <div class="tile">Solid<span>Smooth walls</span></div>
        </button>
      </section>`;
  }
}

/* ---------- page ---------- */

@customElement("app-root")
class AppRoot extends LitElement {
  static styles = [
    base,
    css`
      :host {
        display: grid;
        grid-template: auto minmax(0, 1fr) / 512px minmax(0, 1fr) 560px;
        height: 100vh;
        overflow: hidden;
      }
      top-bar {
        grid-column: 1 / -1;
      }
    `,
  ];

  render() {
    return html`<top-bar></top-bar>
      <design-panel></design-panel>
      <drawer-view></drawer-view>
      <module-panel></module-panel>`;
  }
}
